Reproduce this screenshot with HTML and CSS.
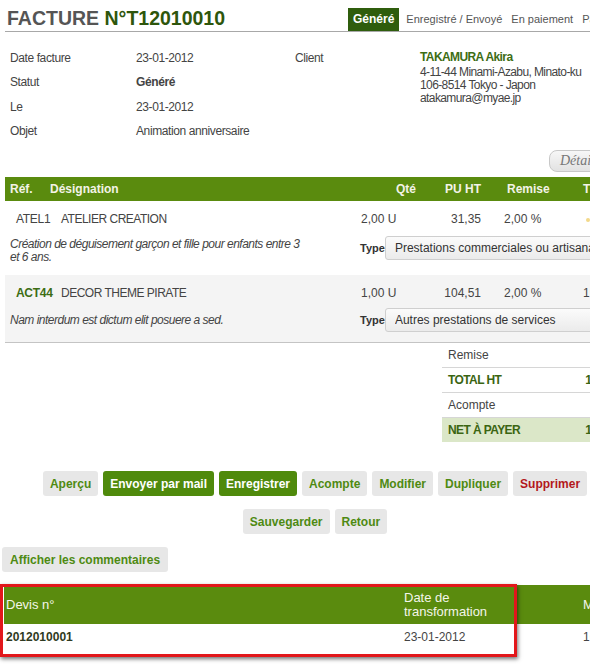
FILE: index.html
```
<!DOCTYPE html>
<html lang="fr">
<head>
<meta charset="utf-8">
<title>Facture N°T12010010</title>
<link rel="stylesheet" href="styles.css">
</head>
<body>
<div class="page">
  <div class="header">
    <h1 class="title">FACTURE <span class="num">N°T12010010</span></h1>
    <div class="tabs">
      <span class="tab active">Généré</span>
      <span class="tab first">Enregistré / Envoyé</span>
      <span class="tab">En paiement</span>
      <span class="tab">Payé</span>
    </div>
  </div>

  <div class="info">
    <div class="lbl">Date facture</div><div class="val">23-01-2012</div>
    <div class="lbl">Client</div>
    <div class="client">
      <div class="cname">TAKAMURA Akira</div>
      <div>4-11-44 Minami-Azabu, Minato-ku</div>
      <div>106-8514 Tokyo - Japon</div>
      <div>atakamura@myae.jp</div>
    </div>
    <div class="lbl">Statut</div><div class="val strong">Généré</div><div></div>
    <div class="lbl">Le</div><div class="val">23-01-2012</div><div></div>
    <div class="lbl">Objet</div><div class="val">Animation anniversaire</div><div></div>
  </div>

  <div class="detail-row"><button class="detail-btn">Détail</button></div>

  <div class="lines">
    <div class="thead">
      <div class="h-ref">Réf.</div>
      <div class="h-des">Désignation</div>
      <div class="h-qty">Qté</div>
      <div class="h-pu">PU HT</div>
      <div class="h-rem">Remise</div>
      <div class="h-tva">TVA</div>
    </div>

    <div class="row">
      <div class="line1">
        <div class="c-ref">ATEL1</div>
        <div class="c-des">ATELIER CREATION</div>
        <div class="c-qty">2,00 U</div>
        <div class="c-pu">31,35</div>
        <div class="c-rem">2,00 %</div>
        <div class="c-tva"><span class="dot"></span></div>
      </div>
      <div class="line2">
        <div class="desc">Création de déguisement garçon et fille pour enfants entre 3 et 6 ans.</div>
        <label class="type-lbl">Type</label>
        <select class="type-sel"><option>Prestations commerciales ou artisanales</option></select>
      </div>
    </div>

    <div class="row alt">
      <div class="line1">
        <div class="c-ref code">ACT44</div>
        <div class="c-des">DECOR THEME PIRATE</div>
        <div class="c-qty">1,00 U</div>
        <div class="c-pu">104,51</div>
        <div class="c-rem">2,00 %</div>
        <div class="c-tva">19,60 %</div>
      </div>
      <div class="line2 mid">
        <div class="desc">Nam interdum est dictum elit posuere a sed.</div>
        <label class="type-lbl">Type</label>
        <select class="type-sel"><option>Autres prestations de services</option></select>
      </div>
    </div>
  </div>

  <div class="totals">
    <div class="trow"><span class="tl">Remise</span><span class="tv"></span></div>
    <div class="trow bold"><span class="tl">TOTAL HT</span><span class="tv">165,35 €</span></div>
    <div class="trow"><span class="tl">Acompte</span><span class="tv"></span></div>
    <div class="trow net bold"><span class="tl">NET À PAYER</span><span class="tv">165,35 €</span></div>
  </div>

  <div class="actions">
    <button class="btn">Aperçu</button>
    <button class="btn green">Envoyer par mail</button>
    <button class="btn green">Enregistrer</button>
    <button class="btn">Acompte</button>
    <button class="btn">Modifier</button>
    <button class="btn">Dupliquer</button>
    <button class="btn red">Supprimer</button>
  </div>
  <div class="actions second">
    <button class="btn">Sauvegarder</button>
    <button class="btn">Retour</button>
  </div>
  <div class="comments"><button class="btn wide">Afficher les commentaires</button></div>

  <div class="quotes">
    <div class="qhead">
      <div class="q1">Devis n°</div>
      <div class="q2">Date de<br>transformation</div>
      <div class="q3">Montant HT</div>
    </div>
    <div class="qrow">
      <div class="q1 qnum">2012010001</div>
      <div class="q2">23-01-2012</div>
      <div class="q3">165,35 €</div>
    </div>
    <div class="highlight"></div>
  </div>
</div>
</body>
</html>
```
FILE: styles.css
```
html, body {
  margin: 0;
  padding: 0;
  overflow: hidden;
}
body {
  width: 590px;
  height: 664px;
  background: #fff;
  font-family: "Liberation Sans", Arial, sans-serif;
  font-size: 12px;
  color: #444;
}
.page {
  width: 640px;
}

/* header */
.header {
  display: flex;
  align-items: flex-end;
  margin-left: 5px;
  height: 31px;
  border-bottom: 1px solid #a8a8a8;
}
.title {
  margin: 0;
  width: 341px;
  padding: 0 0 2px 2px;
  font-size: 19.5px;
  line-height: 22px;
  font-weight: bold;
  color: #555;
}
.title .num { color: #2e560c; }
.tabs {
  display: flex;
  align-items: flex-end;
}
.tab {
  height: 23px;
  line-height: 23px;
  padding: 0 4.5px;
  font-size: 11px;
  color: #555;
}
.tab.first { padding-left: 7px; }
.tab.active {
  padding: 0 5px;
  background: #2f5d0d;
  color: #fff;
  font-size: 12px;
  font-weight: bold;
}

/* info */
.info {
  display: grid;
  grid-template-columns: 126px 159px 125px 1fr;
  grid-auto-rows: 24.3px;
  padding: 14px 0 0 10px;
  letter-spacing: -0.4px;
}
.lbl, .val { line-height: 24px; }
.val.strong { font-weight: bold; }
.client {
  grid-row: span 4;
  padding-top: 2px;
  line-height: 13px;
  letter-spacing: -0.6px;
}
.cname {
  line-height: 18px;
  font-weight: bold;
  color: #3d6d14;
  letter-spacing: -0.6px;
}

/* detail button */
.detail-row {
  display: flex;
  justify-content: flex-end;
  padding: 7px 16px 0 0;
}
.detail-btn {
  width: 75px;
  height: 22px;
  padding: 0 0 0 10px;
  text-align: left;
  border: 1px solid #c8c8c8;
  border-radius: 8px;
  background: linear-gradient(#f7f7f7, #e2e2e2);
  font-family: "Liberation Serif", "Times New Roman", serif;
  font-style: italic;
  font-size: 14px;
  color: #777;
}

/* lines table */
.lines { margin: 5px 0 0 5px; }
.thead {
  display: grid;
  grid-template-columns: 40px 315px 60px 65px 85px 1fr;
  height: 24px;
  line-height: 24px;
  background: #5a8b0e;
  color: #f3f3e6;
  font-weight: bold;
}
.h-ref, .h-des { padding-left: 5px; }
.h-qty, .h-pu { text-align: right; padding-right: 4px; }
.h-rem { padding-left: 22px; }
.h-tva { padding-left: 13px; }

.row { padding: 10px 0 11px; }
.row.alt {
  background: #f4f4f4;
  padding: 10px 0 10px;
  border-bottom: 1px solid #c4c4c4;
}
.line1 {
  display: grid;
  grid-template-columns: 56px 300px 60px 60px 84px 1fr;
  height: 16px;
  line-height: 16px;
}
.c-ref { padding-left: 11px; letter-spacing: -0.3px; }
.c-des { letter-spacing: -0.5px; }
.c-ref.code { font-weight: bold; color: #3d6d14; }
.c-pu { text-align: right; }
.c-rem { padding-left: 23px; }
.c-tva { padding-left: 18px; }
.dot {
  display: inline-block;
  margin-left: 3px;
  width: 4px;
  height: 4px;
  border-radius: 50%;
  background: #f3d98a;
  vertical-align: middle;
}
.line2 {
  display: flex;
  align-items: flex-start;
  margin-top: 9px;
}
.line2.mid {
  align-items: center;
  margin-top: 7px;
}
.desc {
  box-sizing: border-box;
  width: 361px;
  padding: 0 50px 0 5px;
  margin-top: 2px;
  font-style: italic;
  line-height: 13px;
  letter-spacing: -0.5px;
}
.line2.mid .desc { margin-top: 0; }
.type-lbl {
  width: 25px;
  font-size: 11px;
  font-weight: bold;
  color: #333;
  line-height: 24px;
}
.type-sel {
  -webkit-appearance: none;
  appearance: none;
  width: 260px;
  height: 24px;
  padding: 0 0 0 9px;
  border: 1px solid #cfcfcf;
  border-radius: 3px;
  background: linear-gradient(#fbfbfb, #ebebeb);
  font-family: "Liberation Sans", Arial, sans-serif;
  font-size: 12px;
  color: #333;
}

/* totals */
.totals {
  margin-left: 442px;
  width: 190px;
}
.trow {
  display: flex;
  justify-content: space-between;
  height: 24px;
  line-height: 24px;
  padding: 0 0 0 6px;
  border-bottom: 1px solid #d6d6d6;
}
.trow.bold { font-weight: bold; color: #3b6512; }
.trow.bold .tl { letter-spacing: -0.6px; }
.trow.net {
  background: #dbe7c8;
  border-bottom: none;
}

/* buttons */
.actions {
  width: 630px;
  display: flex;
  justify-content: center;
  gap: 5px;
  margin-top: 29px;
}
.actions.second { margin-top: 13px; }
.btn {
  height: 25px;
  padding: 0 7px;
  border: none;
  border-radius: 3px;
  background: #e7e7e7;
  color: #4e8a12;
  font-family: "Liberation Sans", Arial, sans-serif;
  font-size: 12px;
  font-weight: bold;
}
.btn.green { background: #4f8a0c; color: #fff; }
.btn.red { color: #b3171b; }
.btn.wide { padding: 0 8px; }
.comments {
  margin: 13px 0 0 2px;
  display: flex;
}

/* quotes table */
.quotes {
  position: relative;
  margin: 13px 0 0 4px;
}
.qhead, .qrow {
  display: grid;
  grid-template-columns: 400px 175px 1fr;
}
.qhead {
  height: 39px;
  background: #5a8b0e;
  color: #f4f6ea;
  font-size: 13px;
  line-height: 14px;
  align-items: center;
}
.qrow {
  height: 26px;
  line-height: 26px;
}
.q1 { padding-left: 2px; }
.q3 { padding-left: 4px; white-space: nowrap; }
.qnum { font-weight: bold; color: #2f3a22; }
.highlight {
  position: absolute;
  left: -4px;
  top: -1px;
  width: 517px;
  height: 73px;
  box-sizing: border-box;
  border: 3px solid #e2171b;
  box-shadow: 1px 2px 4px rgba(0, 0, 0, 0.55);
}
```
